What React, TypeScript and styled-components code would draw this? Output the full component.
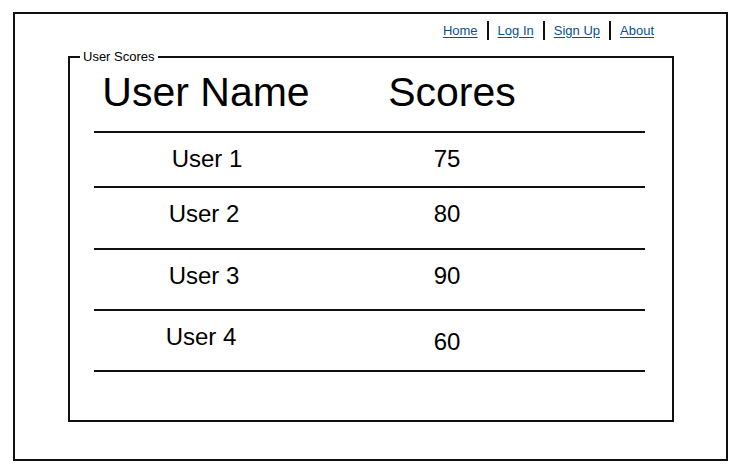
import React from "react";
import styled, { createGlobalStyle } from "styled-components";

const Global = createGlobalStyle`
  html, body { margin: 0; padding: 0; background: #fff; }
  body { font-family: "Liberation Sans", Arial, sans-serif; color: #000; }
`;

const Frame = styled.div`
  box-sizing: border-box;
  margin: 12px 0 0 13px;
  width: 715px;
  height: 449px;
  border: 2px solid #111;
  display: flex;
  flex-direction: column;
`;

const Nav = styled.nav`
  display: flex;
  justify-content: flex-end;
  align-items: center;
  padding: 6px 72px 0 0;
  height: 20px;
`;

const NavLink = styled.a`
  font-family: "Liberation Sans", Arial, sans-serif;
  font-size: 13px;
  color: #0b4f8f;
  text-decoration: underline;
  text-underline-offset: 2px;
  cursor: pointer;
`;

const Sep = styled.span`
  display: inline-block;
  width: 2px;
  height: 19px;
  background: #111;
  margin: 0 9px;
`;

const Group = styled.fieldset`
  box-sizing: border-box;
  margin: 9px 0 0 53px;
  width: 606px;
  height: 373px;
  border: 2px solid #111;
  padding: 0 0 0 24px;
`;

const Legend = styled.legend`
  font-family: "Liberation Sans", Arial, sans-serif;
  font-size: 13px;
  padding: 0 3px;
  margin-left: -14px;
`;

const Table = styled.div`
  width: 551px;
`;

const Row = styled.div<{ $h: number }>`
  display: grid;
  grid-template-columns: 224px 258px 1fr;
  height: ${(p) => p.$h}px;
  border-bottom: 2px solid #111;
  box-sizing: content-box;
`;

const HeadCell = styled.div<{ $dx?: number }>`
  font-family: "Liberation Sans", Arial, sans-serif;
  font-size: 41px;
  text-align: center;
  padding-top: 5px;
  line-height: 46px;
  transform: translateX(${(p) => p.$dx || 0}px);
`;

const Cell = styled.div<{ $dx?: number; $dy?: number }>`
  font-family: "Liberation Sans", Arial, sans-serif;
  font-size: 24px;
  line-height: 28px;
  text-align: center;
  padding-top: ${(p) => 12 + (p.$dy || 0)}px;
  transform: translateX(${(p) => p.$dx || 0}px);
`;

const rows = [
  { name: "User 1", score: "75", h: 53, dx: 1, sdy: 0, ndy: 0 },
  { name: "User 2", score: "80", h: 60, dx: -2, sdy: 0, ndy: 0 },
  { name: "User 3", score: "90", h: 59, dx: -2, sdy: 0, ndy: 0 },
  { name: "User 4", score: "60", h: 59, dx: -5, sdy: 5, ndy: 0 },
];

export default function App() {
  return (
    <>
      <Global />
      <Frame>
        <Nav>
          <NavLink>Home</NavLink>
          <Sep />
          <NavLink>Log In</NavLink>
          <Sep />
          <NavLink>Sign Up</NavLink>
          <Sep />
          <NavLink>About</NavLink>
        </Nav>
        <Group>
          <Legend>User Scores</Legend>
          <Table>
            <Row $h={67}>
              <HeadCell>User Name</HeadCell>
              <HeadCell $dx={5}>Scores</HeadCell>
            </Row>
            {rows.map((r) => (
              <Row key={r.name} $h={r.h}>
                <Cell $dx={r.dx} $dy={r.ndy}>{r.name}</Cell>
                <Cell $dy={r.sdy}>{r.score}</Cell>
              </Row>
            ))}
          </Table>
        </Group>
      </Frame>
    </>
  );
}
